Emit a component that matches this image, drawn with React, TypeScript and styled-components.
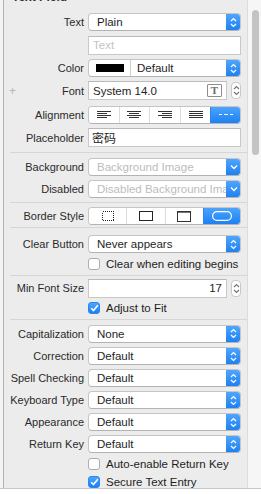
import React from 'react'
import styled, { createGlobalStyle } from 'styled-components'

const GlobalStyle = createGlobalStyle`
  html, body { margin: 0; padding: 0; background: #fff; }
  body { font-family: "Liberation Sans", Arial, sans-serif; }
`

const Window = styled.div`
  width: 261px;
  height: 494px;
  overflow: hidden;
  background: #fff;
`

const Main = styled.div`
  display: flex;
  height: 488px;
  border-bottom: 1px solid #c6c6c6;
  background: #f3f3f3;
`

const Inspector = styled.div`
  margin-left: 3px;
  width: 243px;
  border-left: 1px solid #b2b2b2;
  border-right: 1px solid #dcdcdc;
  background: #ececec;
  overflow: hidden;
`

const ScrollTrack = styled.div`
  width: 13px;
  background: #f6f6f6;
  padding-top: 10px;
  box-sizing: border-box;
`

const Thumb = styled.div`
  margin-left: 4px;
  width: 7px;
  height: 145px;
  border-radius: 4px;
  background: #c3c3c3;
`

const Header = styled.div`
  height: 19px;
  margin-top: -8px;
  margin-left: 8px;
  font-size: 12px;
  font-weight: bold;
  color: #333;
  line-height: 11px;
`

const Section = styled.div<{ $top?: number; $bottom?: number }>`
  padding-top: ${p => p.$top ?? 0}px;
  padding-bottom: ${p => p.$bottom ?? 0}px;
`

const Separator = styled.div`
  height: 1px;
  margin-left: 6px;
  background: #d6d6d6;
`

const Row = styled.div<{ $h?: number }>`
  display: flex;
  align-items: center;
  height: ${p => p.$h ?? 22}px;
`

const Label = styled.div`
  width: 80px;
  display: flex;
  align-items: center;
  justify-content: flex-end;
  font-size: 11px;
  color: #2a2a2a;
  white-space: nowrap;
  margin-right: 4px;
`

const Plus = styled.span`
  margin-right: auto;
  margin-left: 5px;
  color: #b5b5b5;
  font-size: 12px;
  line-height: 10px;
`

const Popup = styled.div<{ $disabled?: boolean }>`
  width: 153px;
  height: 18px;
  box-sizing: border-box;
  display: flex;
  align-items: center;
  background: #fff;
  border: 1px solid #c5c5c5;
  border-bottom-color: #b3b3b3;
  border-radius: 4px;
  font-size: 11.5px;
  color: ${p => (p.$disabled ? '#bcbcbc' : '#1e1e1e')};
  overflow: hidden;
`

const PopupText = styled.span`
  flex: 1;
  padding-left: 8px;
  white-space: nowrap;
  overflow: hidden;
`

const Arrow = styled.div`
  width: 15px;
  align-self: stretch;
  margin: -1px -1px -1px 0;
  display: flex;
  align-items: center;
  justify-content: center;
  border-radius: 0 4px 4px 0;
  background: linear-gradient(#52a8fd, #1b7ff2);
`

const ColorCell = styled.div`
  width: 41px;
  align-self: stretch;
  display: flex;
  align-items: center;
  justify-content: center;
  border-right: 1px solid #d0d0d0;
`

const Swatch = styled.div`
  width: 28px;
  height: 8px;
  background: #000;
`

const Field = styled.div<{ $w?: number; $align?: string; $muted?: boolean }>`
  width: ${p => p.$w ?? 153}px;
  height: 19px;
  box-sizing: border-box;
  display: flex;
  align-items: center;
  justify-content: ${p => p.$align ?? 'flex-start'};
  padding: 0 4px 0 4px;
  background: #fff;
  border: 1px solid #c8c8c8;
  border-top-color: #bababa;
  font-size: 11.5px;
  color: ${p => (p.$muted ? '#c4c4c4' : '#1e1e1e')};
  white-space: nowrap;
`

const Cjk = styled.span`
  font-family: "Noto Sans CJK SC", "Liberation Sans", sans-serif;
  font-size: 12px;
  margin-left: -1px;
`

const FontIcon = styled.span`
  margin-left: auto;
  width: 13px;
  height: 11px;
  border: 1px solid #8d8d8d;
  border-radius: 1px;
  display: flex;
  align-items: center;
  justify-content: center;
  font-family: "Liberation Serif", "Times New Roman", serif;
  font-weight: bold;
  font-size: 11px;
  color: #6b6b6b;
  line-height: 11px;
`

const Stepper = styled.div`
  margin-left: 4px;
  width: 10px;
  height: 17px;
  box-sizing: border-box;
  border: 1px solid #c8c8c8;
  border-radius: 4px;
  background: #fff;
  display: flex;
  align-items: center;
  justify-content: center;
`

const Segmented = styled.div`
  width: 153px;
  height: 18px;
  box-sizing: border-box;
  display: flex;
  background: #fff;
  border: 1px solid #c5c5c5;
  border-bottom-color: #b3b3b3;
  border-radius: 4px;
  overflow: hidden;
`

const Segment = styled.div<{ $on?: boolean }>`
  flex: 1;
  display: flex;
  align-items: center;
  justify-content: center;
  border-left: 1px solid #dcdcdc;
  &:first-child { border-left: none; }
  background: ${p => (p.$on ? 'linear-gradient(#4ea6fd, #1b7ff2)' : '#fff')};
  ${p => (p.$on ? 'margin: -1px -1px -1px 0; border-left-color: #2a86f3;' : '')}
`

const CheckRow = styled.div<{ $h?: number }>`
  display: flex;
  align-items: center;
  height: ${p => p.$h ?? 18}px;
  padding-left: 84px;
  font-size: 11.5px;
  color: #1e1e1e;
  gap: 6px;
  white-space: nowrap;
`

const Box = styled.div<{ $on?: boolean }>`
  width: 12px;
  height: 12px;
  box-sizing: border-box;
  border-radius: 3px;
  border: 1px solid ${p => (p.$on ? '#2a86f3' : '#adadad')};
  background: ${p => (p.$on ? 'linear-gradient(#4ea6fd, #1b7ff2)' : '#fff')};
  display: flex;
  align-items: center;
  justify-content: center;
`

const UpDown = ({ color = '#fff' }: { color?: string }) => (
  <svg width="7" height="11" viewBox="0 0 7 11">
    <path d="M1 4 L3.5 1.5 L6 4" fill="none" stroke={color} strokeWidth="1.2" />
    <path d="M1 7 L3.5 9.5 L6 7" fill="none" stroke={color} strokeWidth="1.2" />
  </svg>
)

const Down = () => (
  <svg width="8" height="6" viewBox="0 0 8 6">
    <path d="M1 1.5 L4 4.5 L7 1.5" fill="none" stroke="#fff" strokeWidth="1.4" />
  </svg>
)

const Check = () => (
  <svg width="9" height="8" viewBox="0 0 9 8">
    <path d="M1.2 4.2 L3.5 6.5 L7.8 1.2" fill="none" stroke="#fff" strokeWidth="1.6" />
  </svg>
)

const AlignIcon = ({ kind }: { kind: 'left' | 'center' | 'right' | 'justify' }) => {
  const rows = [14, 10, 14, 10]
  return (
    <svg width="14" height="8" viewBox="0 0 14 8">
      {rows.map((w, i) => {
        const len = kind === 'justify' ? 14 : w
        const x = kind === 'left' || kind === 'justify' ? 0 : kind === 'right' ? 14 - len : (14 - len) / 2
        return <rect key={i} x={x} y={i * 2} width={len} height="1" fill="#333" />
      })}
    </svg>
  )
}

const NaturalIcon = () => (
  <svg width="14" height="3" viewBox="0 0 14 3">
    <path d="M0 1.5 H3 M5 1.5 H9 M11 1.5 H14" stroke="#fff" strokeWidth="1" />
  </svg>
)

const BorderNone = () => (
  <svg width="12" height="10" viewBox="0 0 12 10" shapeRendering="crispEdges">
    <rect x="0.5" y="0.5" width="11" height="9" fill="none" stroke="#222" strokeDasharray="1 1" />
  </svg>
)

const BorderLine = () => (
  <svg width="14" height="10" viewBox="0 0 14 10" shapeRendering="crispEdges">
    <rect x="0.5" y="0.5" width="13" height="9" fill="none" stroke="#222" />
  </svg>
)

const BorderBezel = () => (
  <svg width="14" height="11" viewBox="0 0 14 11" shapeRendering="crispEdges">
    <rect x="0.5" y="0.5" width="13" height="10" fill="#fff" stroke="#333" />
    <path d="M1 1.5 H13" stroke="#777" />
  </svg>
)

const BorderRound = () => (
  <svg width="20" height="10" viewBox="0 0 20 10">
    <rect x="0.6" y="0.6" width="18.8" height="8.8" rx="4.4" fill="none" stroke="#fff" strokeWidth="1.2" />
  </svg>
)

const PopupRow = ({ label, value, h }: { label: string; value: string; h?: number }) => (
  <Row $h={h}>
    <Label>{label}</Label>
    <Popup>
      <PopupText>{value}</PopupText>
      <Arrow><UpDown /></Arrow>
    </Popup>
  </Row>
)

const ImageRow = ({ label, value }: { label: string; value: string }) => (
  <Row>
    <Label>{label}</Label>
    <Popup $disabled>
      <PopupText>{value}</PopupText>
      <Arrow><Down /></Arrow>
    </Popup>
  </Row>
)

export default function App() {
  return (
    <Window>
      <GlobalStyle />
      <Main>
        <Inspector>
          <Header>Text Field</Header>
          <Section $bottom={4}>
            <PopupRow label="Text" value="Plain" />
            <Row $h={24}>
              <Label />
              <Field $muted>Text</Field>
            </Row>
            <Row>
              <Label>Color</Label>
              <Popup>
                <ColorCell><Swatch /></ColorCell>
                <PopupText style={{ paddingLeft: 6 }}>Default</PopupText>
                <Arrow><UpDown /></Arrow>
              </Popup>
            </Row>
            <Row $h={23}>
              <Label><Plus>+</Plus>Font</Label>
              <Field $w={139}>
                System 14.0
                <FontIcon>T</FontIcon>
              </Field>
              <Stepper><UpDown color="#777" /></Stepper>
            </Row>
            <Row $h={25}>
              <Label>Alignment</Label>
              <Segmented>
                <Segment><AlignIcon kind="left" /></Segment>
                <Segment><AlignIcon kind="center" /></Segment>
                <Segment><AlignIcon kind="right" /></Segment>
                <Segment><AlignIcon kind="justify" /></Segment>
                <Segment $on><NaturalIcon /></Segment>
              </Segmented>
            </Row>
            <Row $h={21}>
              <Label>Placeholder</Label>
              <Field><Cjk>密码</Cjk></Field>
            </Row>
          </Section>
          <Separator />
          <Section $top={3} $bottom={2}>
            <ImageRow label="Background" value="Background Image" />
            <ImageRow label="Disabled" value="Disabled Background Image" />
          </Section>
          <Separator />
          <Section $top={2}>
            <Row>
              <Label>Border Style</Label>
              <Segmented>
                <Segment><BorderNone /></Segment>
                <Segment><BorderLine /></Segment>
                <Segment><BorderBezel /></Segment>
                <Segment $on><BorderRound /></Segment>
              </Segmented>
            </Row>
          </Section>
          <Separator />
          <Section $top={5} $bottom={2}>
            <PopupRow label="Clear Button" value="Never appears" />
            <CheckRow>
              <Box />
              Clear when editing begins
            </CheckRow>
          </Section>
          <Separator />
          <Section $top={1} $bottom={2}>
            <Row>
              <Label>Min Font Size</Label>
              <Field $w={139} $align="flex-end">17</Field>
              <Stepper><UpDown color="#777" /></Stepper>
            </Row>
            <CheckRow>
              <Box $on><Check /></Box>
              Adjust to Fit
            </CheckRow>
          </Section>
          <Separator />
          <Section $top={2}>
            <PopupRow label="Capitalization" value="None" h={23} />
            <PopupRow label="Correction" value="Default" />
            <PopupRow label="Spell Checking" value="Default" />
            <PopupRow label="Keyboard Type" value="Default" />
            <PopupRow label="Appearance" value="Default" />
            <PopupRow label="Return Key" value="Default" />
            <CheckRow>
              <Box />
              Auto-enable Return Key
            </CheckRow>
            <CheckRow>
              <Box $on><Check /></Box>
              Secure Text Entry
            </CheckRow>
          </Section>
        </Inspector>
        <ScrollTrack>
          <Thumb />
        </ScrollTrack>
      </Main>
    </Window>
  )
}
